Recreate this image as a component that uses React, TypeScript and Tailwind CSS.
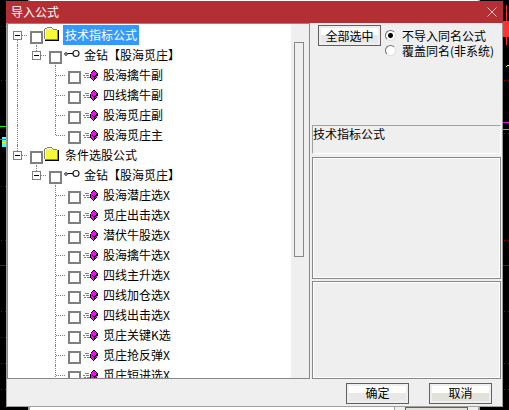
import React, { useState } from 'react';
import { clsx } from 'clsx';

type Guide = 'none' | 'line' | 'tee' | 'end';
type IconKind = 'folder' | 'key' | 'formula';

interface TreeRow {
  id: string;
  label: string;
  icon: IconKind;
  guides: Guide[];
  start?: boolean;
}

const indicatorNames = ['股海擒牛副', '四线擒牛副', '股海觅庄副', '股海觅庄主'];

const conditionNames = [
  '股海潜庄选X',
  '觅庄出击选X',
  '潜伏牛股选X',
  '股海擒牛选X',
  '四线主升选X',
  '四线加仓选X',
  '四线出击选X',
  '觅庄关键K选',
  '觅庄抢反弹X',
  '觅庄短进选X',
];

const rows: TreeRow[] = [
  { id: 'indicator', label: '技术指标公式', icon: 'folder', guides: ['tee'], start: true },
  { id: 'indicator-group', label: '金钻【股海觅庄】', icon: 'key', guides: ['line', 'end'] },
  ...indicatorNames.map((label, i): TreeRow => ({
    id: `indicator-${i}`,
    label,
    icon: 'formula',
    guides: ['line', 'none', i === indicatorNames.length - 1 ? 'end' : 'tee'],
  })),
  { id: 'condition', label: '条件选股公式', icon: 'folder', guides: ['end'] },
  { id: 'condition-group', label: '金钻【股海觅庄】', icon: 'key', guides: ['none', 'end'] },
  ...conditionNames.map((label, i): TreeRow => ({
    id: `condition-${i}`,
    label,
    icon: 'formula',
    guides: ['none', 'none', 'tee'],
  })),
];

// Checkerboard dither inside the folder
const folderDots: string[] = [];
for (let y = 3; y < 12; y++) {
  for (let x = 2 + (y % 2); x < 13; x += 2) {
    folderDots.push(`M${x} ${y}h1v1h-1z`);
  }
}

function FolderIcon() {
  return (
    <svg width="16" height="14" viewBox="0 0 16 14" shapeRendering="crispEdges" aria-hidden="true">
      <path d="M1 3H2V2H3V1H8V2H9V3H13V12H1Z" fill="#ffff40" />
      <path d={folderDots.join('')} fill="#dcdcdc" />
      <path d="M3 0H8V1H3ZM1 1H3V2H1ZM8 1H9V2H8ZM0 2H1V12H0ZM9 2H13V3H9ZM13 3H14V12H13ZM1 12H14V13H1Z" fill="#808080" />
      <path d="M14 3H15V13H14ZM1 13H15V14H1Z" fill="#000" />
      <path d="M3 1H8V2H3ZM1 3H2V12H1Z" fill="#ffffe0" />
    </svg>
  );
}

function KeyIcon() {
  return (
    <svg width="16" height="14" viewBox="0 0 16 14" aria-hidden="true">
      <circle cx="2" cy="7" r="1.3" fill="#fff" stroke="#222" />
      <path d="M3.5 6.5H9.5" stroke="#000" strokeWidth="1" />
      <circle cx="12" cy="6.5" r="3" fill="#fff" stroke="#222" strokeWidth="1.2" />
    </svg>
  );
}

function FormulaIcon() {
  return (
    <svg width="16" height="14" viewBox="0 0 16 14" shapeRendering="crispEdges" aria-hidden="true">
      <path d="M2 6.5H6M0 8.5H2M3 8.5H6M1 10.5H3M4 10.5H7" stroke="#808080" />
      <path d="M10 3H12V4H13V5H14V6H15V9H14V11H13V12H12V13H11V14H10V13H9V12H8V11H7V7H8V5H9V4H10Z" fill="#000" />
      <path d="M10 4H12V5H13V6H14V7H13V8H12V9H10V8H8V6H9V5H10Z" fill="#ff00ff" />
      <path d="M8 8H9V9H10V10H11V13H10V12H9V11H8ZM12 10H13V9H14V10H13V11H12Z" fill="#ff00ff" />
    </svg>
  );
}

function RowIcon({ kind }: { kind: IconKind }) {
  if (kind === 'folder') return <FolderIcon />;
  if (kind === 'key') return <KeyIcon />;
  return <FormulaIcon />;
}

// One indent column: dotted connector lines, plus the expander on branches
function GuideCell({ guide, expander, start }: { guide: Guide; expander?: boolean; start?: boolean }) {
  return (
    <span className="relative flex h-full w-[19px] shrink-0 pl-[9px]">
      {guide !== 'none' && (
        <span
          className={clsx(
            'w-0 border-l border-dotted border-[#808080]',
            guide === 'end' ? 'h-1/2' : start ? 'mt-[10px] h-1/2' : 'h-full',
          )}
        />
      )}
      {(guide === 'tee' || guide === 'end') && (
        <span className="mt-[10px] h-0 flex-1 border-t border-dotted border-[#808080]" />
      )}
      {expander && (
        <button
          type="button"
          aria-label="折叠"
          className="absolute left-[5px] top-[6px] flex h-[9px] w-[9px] items-center justify-center border border-[#808080] bg-white"
        >
          <span className="h-px w-[5px] bg-black" />
        </button>
      )}
    </span>
  );
}

// Slice of the chart that shows on both sides of the dialog
function ChartEdge({ side }: { side: 'left' | 'right' }) {
  const left = side === 'left';
  const gridLines = left ? [26, 80, 133, 186, 240, 311, 337, 363, 389] : [80, 133, 240, 311, 363, 389];
  return (
    <svg
      className={clsx('absolute top-0', left ? 'left-0' : 'right-0')}
      width="6"
      height="410"
      shapeRendering="crispEdges"
      aria-hidden="true"
    >
      {gridLines.map(y => (
        <path key={y} d={`M1 ${y}.5H6`} stroke="#a00000" strokeDasharray="1 3" />
      ))}
      <path d="M0 265.5H6" stroke="#a00000" />
      {left ? (
        <>
          <path d="M0 126.5H6" stroke="#00ff00" />
          <path d="M2 137H6V147H2Z" fill="#40ffff" />
          <path d="M0 139.5H6" stroke="#ff00ff" />
          <path d="M2 142.5H5" stroke="#ffff00" />
        </>
      ) : (
        <>
          <path d="M3.5 5V45" stroke="#ff3232" />
          <path d="M0 21H6V37H0Z" fill="#ff3232" />
          <path d="M3 66.5H4M4 65.5H6" stroke="#ffff00" />
          <path d="M0 122.5H6" stroke="#ff00ff" />
          <path d="M0 129.5H6" stroke="#00ff00" />
        </>
      )}
    </svg>
  );
}

const pushButton =
  'flex h-[21px] w-[63px] shrink-0 items-center justify-center border border-[#606060] bg-linear-to-b from-white from-50% to-50% shadow-[inset_0_0_0_2px_#efefef]';

export default function App() {
  const [selected, setSelected] = useState('indicator');
  const [checked, setChecked] = useState<string[]>([]);
  const [mode, setMode] = useState('skip');

  const toggle = (id: string) => {
    setChecked(checked.includes(id) ? checked.filter(c => c !== id) : [...checked, id]);
  };

  const selectedLabel = rows.find(r => r.id === selected)?.label;

  return (
    <div
      lang="zh-CN"
      className="relative flex h-screen overflow-hidden bg-black px-[6px] pt-px pb-[3px] font-['Noto_Sans_CJK_SC',sans-serif] text-[12px] leading-5 text-black"
    >
      <ChartEdge side="left" />
      <ChartEdge side="right" />
      {/* Window behind the dialog */}
      <div className="absolute inset-y-0 left-[28px] right-[29px] border-x-2 border-[#a0a0a0] bg-white">
        <div className="absolute bottom-0 right-0 flex h-[3px] w-[84px] border-l border-[#a0a0a0] bg-[#efefef] px-[10px]">
          <div className="flex-1 border-x border-t border-[#606060] bg-[#e2e1da]" />
        </div>
      </div>

      <div role="dialog" aria-label="导入公式" className="relative flex min-w-0 flex-1 flex-col bg-[#efefef]">
        <header className="flex h-[22px] shrink-0 items-center justify-between bg-[#b42f34] pl-[5px] pr-[6px] text-white">
          <h1>导入公式</h1>
          <button type="button" aria-label="关闭" className="flex">
            <svg width="10" height="10" viewBox="0 0 10 10" aria-hidden="true">
              <path d="M0.5 0.5L9.5 9.5M9.5 0.5L0.5 9.5" stroke="#e8bcbe" fill="none" />
            </svg>
          </button>
        </header>

        <div className="flex min-h-0 flex-1 flex-col border-x border-b border-[#a0a0a0]">
          <div className="flex min-h-0 flex-1">
            {/* Formula tree */}
            <div className="flex min-w-0 flex-1 border border-[#888888] bg-white">
              <ul className="min-w-0 flex-1 overflow-hidden pt-px">
                {rows.map(row => (
                  <li key={row.id} className="flex h-5">
                    {row.guides.map((guide, i) => (
                      <GuideCell
                        key={i}
                        guide={guide}
                        start={row.start}
                        expander={row.icon !== 'formula' && i === row.guides.length - 1}
                      />
                    ))}
                    <input
                      type="checkbox"
                      aria-label={row.label}
                      checked={checked.includes(row.id)}
                      onChange={() => toggle(row.id)}
                      className="ml-[3px] mt-[6px] h-[13px] w-[13px] shrink-0 appearance-none border-2 border-[#808080] bg-white checked:bg-[#808080]"
                    />
                    <span className={clsx('mt-[2px] w-[20px] shrink-0', row.icon === 'folder' ? 'pl-px' : 'pl-[2px]')}>
                      <RowIcon kind={row.icon} />
                    </span>
                    <button
                      type="button"
                      onClick={() => setSelected(row.id)}
                      className={clsx('whitespace-nowrap px-[2px]', selected === row.id && 'bg-[#3399ff] text-white')}
                    >
                      {row.label}
                    </button>
                  </li>
                ))}
              </ul>
              <div className="w-[18px] shrink-0 bg-[#efefef] pl-[3px] pt-[18px] pr-[5px]">
                <div className="h-[64%] border border-[#888888]" />
              </div>
            </div>

            {/* Options */}
            <div className="flex w-[192px] shrink-0 flex-col pl-[2px] pr-px">
              <div className="flex h-[102px] items-start pl-[6px] pt-[2px]">
                <button
                  type="button"
                  onClick={() => setChecked(rows.map(r => r.id))}
                  className={clsx(pushButton, 'to-[#e8e8e8]')}
                >
                  全部选中
                </button>
                <fieldset className="ml-[4px] mt-[3px] whitespace-nowrap leading-[15px]">
                  {[
                    { value: 'skip', label: '不导入同名公式' },
                    { value: 'overwrite', label: '覆盖同名(非系统)' },
                  ].map(option => (
                    <label key={option.value} className="flex items-center gap-[6px]">
                      <input
                        type="radio"
                        name="mode"
                        value={option.value}
                        checked={mode === option.value}
                        onChange={() => setMode(option.value)}
                        className="h-[11px] w-[11px] appearance-none rounded-full border border-[#e0e0e0] border-l-[#707070] border-t-[#707070] bg-white checked:bg-[radial-gradient(circle,#000_2px,#fff_3px)]"
                      />
                      {option.label}
                    </label>
                  ))}
                </fieldset>
              </div>
              <p className="h-[29px] shrink-0 border border-b-white border-l-[#a0a0a0] border-r-white border-t-[#a0a0a0] leading-4">
                {selectedLabel}
              </p>
              <div className="mt-[3px] flex min-h-0 flex-[122] border border-[#888888]">
                <div className="flex-1 border border-white" />
              </div>
              <div className="mt-[2px] flex min-h-0 flex-[98] border border-[#888888]">
                <div className="flex-1 border border-white" />
              </div>
            </div>
          </div>

          <footer className="flex h-[27px] shrink-0 items-center justify-end gap-[20px] pt-px pr-[10px]">
            <button type="button" className={clsx(pushButton, 'to-[#e8e8e8]')}>
              确定
            </button>
            <button type="button" className={clsx(pushButton, 'to-[#e2e1da]')}>
              取消
            </button>
          </footer>
        </div>
      </div>
    </div>
  );
}
